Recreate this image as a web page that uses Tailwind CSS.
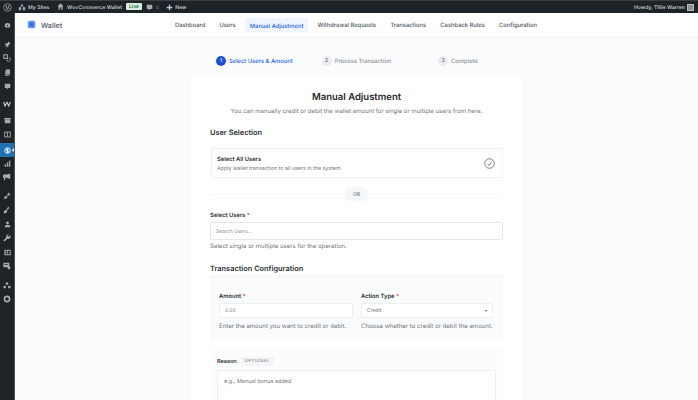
<!DOCTYPE html>
<html lang="en">
<head>
    <meta charset="UTF-8">
    <title>Wallet - Manual Adjustment</title>
    <script src="https://cdn.jsdelivr.net/npm/@tailwindcss/browser@4"></script>
</head>
<body class="w-[698px] h-[400px] overflow-hidden bg-[#f9fbfd] font-['Inter',sans-serif] text-[#1d2327] [text-rendering:geometricPrecision] antialiased">
    <!-- Admin bar -->
    <div class="h-[13px] bg-[#1d2327] border-t border-[#3a3f44] flex items-center text-[5.200px] text-[#d5d7d9] font-medium">
        <div class="w-[15px] flex justify-center">
            <svg class="w-[9px] h-[9px]" viewBox="0 0 20 20"><circle cx="10" cy="10" r="8.500" fill="none" stroke="#a7aaad" stroke-width="1.500"/><path d="M5 6.500h4M11 6.500h4M6.500 7l3 8 2-6M11.500 7l3 7" fill="none" stroke="#a7aaad" stroke-width="1.500"/></svg>
        </div>
        <div class="ml-[3px] flex items-center gap-[2px] w-[36px]">
            <svg class="w-[8px] h-[8px] shrink-0" viewBox="0 0 20 20" fill="#a7aaad"><path d="M10 2l3 4v3h-6V6zM2 12l3-3 3 3v6H2zM12 12l3-3 3 3v6h-6z"/></svg>
            <span class="pt-[3px] whitespace-nowrap">My Sites</span>
        </div>
        <div class="ml-[3px] flex items-center gap-[3px]">
            <svg class="w-[7px] h-[7px] shrink-0" viewBox="0 0 20 20" fill="#a7aaad"><path d="M10 1L1 9h3v10h4v-6h4v6h4V9h3z"/></svg>
            <span class="pt-[3px] whitespace-nowrap">WooCommerce Wallet</span>
        </div>
        <span class="ml-[4px] -translate-y-px px-[3px] h-[7px] leading-[8px] bg-[#d8efe0] text-[#14532d] text-[5px] rounded-[1px]">Live</span>
        <svg class="ml-[4px] w-[7px] h-[7px]" viewBox="0 0 20 20" fill="#a7aaad"><path d="M3 2h14a1 1 0 011 1v10a1 1 0 01-1 1h-5l-4 5v-5H3a1 1 0 01-1-1V3a1 1 0 011-1z"/></svg>
        <span class="ml-[3px] pt-[3px] text-[#6b7075]">0</span>
        <svg class="ml-[7px] w-[7px] h-[7px]" viewBox="0 0 20 20" fill="#c4c6c8"><path d="M8 2h4v6h6v4h-6v6H8v-6H2V8h6z"/></svg>
        <span class="ml-[2px] pt-[3px]">New</span>
        <span class="ml-auto pt-[3px] whitespace-nowrap">Howdy, Tillie Warren</span>
        <div class="ml-[2px] mr-[4px] w-[7px] h-[7px] bg-[#8f9396] border border-[#b9bbbd]"></div>
    </div>

    <div class="flex h-[387px]">
        <!-- Sidebar -->
        <div class="w-[15px] shrink-0 bg-[#1d2327] border-r border-[#4a4f54] flex flex-col text-[#a7aaad]">
            <div class="mt-[5px] h-[14px] flex items-center justify-center"><svg class="w-[7px] h-[7px]" viewBox="0 0 20 20" fill="#a7aaad"><path d="M10 3a8 8 0 00-8 8c0 2 .8 4 2 5h12c1.200-1 2-3 2-5a8 8 0 00-8-8zm0 9a2 2 0 110-4 2 2 0 010 4z"/></svg></div>
            <div class="mt-[5px] h-[14px] flex items-center justify-center"><svg class="w-[7px] h-[7px]" viewBox="0 0 20 20" fill="#a7aaad"><path d="M12 1l7 7-3 1-4 4 1 4-3 1-3-4-6 5 5-6-4-3 1-3 4 1 4-4z"/></svg></div>
            <div class="h-[14px] flex items-center justify-center"><svg class="w-[8px] h-[8px]" viewBox="0 0 20 20" fill="none" stroke="#a7aaad" stroke-width="2.500"><rect x="2" y="2" width="9" height="9"/><rect x="10" y="10" width="8" height="8" stroke-dasharray="3 2"/></svg></div>
            <div class="h-[14px] flex items-center justify-center"><svg class="w-[7px] h-[7px]" viewBox="0 0 20 20" fill="#a7aaad"><path d="M6 1h11v15H6z"/><path d="M3 4v15h11v-2H5V4z"/></svg></div>
            <div class="h-[14px] flex items-center justify-center"><svg class="w-[7px] h-[7px]" viewBox="0 0 20 20" fill="#a7aaad"><path d="M3 2h14a1 1 0 011 1v10a1 1 0 01-1 1h-5l-4 5v-5H3a1 1 0 01-1-1V3a1 1 0 011-1z"/></svg></div>
            <div class="mt-[4px] h-[14px] flex items-center justify-center"><svg class="w-[8px] h-[6px]" viewBox="0 0 24 16" fill="none" stroke="#c3c4c7" stroke-width="3.500"><path d="M2 2l4 12 6-11 5 11 5-12"/></svg></div>
            <div class="mt-[2px] h-[14px] flex items-center justify-center"><svg class="w-[7px] h-[7px]" viewBox="0 0 20 20" fill="#a7aaad"><path d="M1 3h18v4H1zM2 8h16v10H2z"/></svg></div>
            <div class="h-[14px] flex items-center justify-center"><svg class="w-[7px] h-[7px]" viewBox="0 0 20 20" fill="none" stroke="#a7aaad" stroke-width="2.500"><rect x="2" y="3" width="16" height="14"/><path d="M10 3v14"/></svg></div>
            <!-- active Wallet item -->
            <div class="relative mt-[2px] h-[14px] bg-[#2271b1] flex items-center justify-center">
                <svg class="w-[7px] h-[9px]" viewBox="0 0 14 18" fill="none" stroke="#e6f0f8" stroke-width="2"><circle cx="7" cy="9" r="5.500"/><path d="M7 5v8M9 6.500H6a1.500 1.500 0 000 3h2a1.500 1.500 0 010 3H5"/></svg>
                <div class="absolute right-0 top-[5px] w-0 h-0 border-y-[2px] border-y-transparent border-r-[2px] border-r-white"></div>
            </div>
            <div class="-mt-px h-[14px] flex items-center justify-center"><svg class="w-[7px] h-[7px]" viewBox="0 0 20 20" fill="#a7aaad"><path d="M2 12h4v7H2zM8 7h4v12H8zM14 2h4v17h-4z"/></svg></div>
            <div class="h-[14px] flex items-center justify-center"><svg class="w-[8px] h-[8px]" viewBox="0 0 20 20" fill="#a7aaad"><path d="M18 2v13L8 12H5l1 6H3l-1-6a4 4 0 010-8h6z"/></svg></div>
            <div class="mt-[5px] h-[14px] flex items-center justify-center"><svg class="w-[8px] h-[8px]" viewBox="0 0 20 20" fill="#a7aaad"><path d="M13 1l6 6-3 2-2-1-4 4 1 2-3 3-3-1-4 4 3-6-1-2 3-2 2 1 4-4-1-2z"/></svg></div>
            <div class="h-[14px] flex items-center justify-center"><svg class="w-[8px] h-[8px]" viewBox="0 0 20 20" fill="#a7aaad"><path d="M13 2l3 3-5 5-2-2zM8 9l3 3-3 6H2v-5z"/></svg></div>
            <div class="h-[14px] flex items-center justify-center"><svg class="w-[7px] h-[7px]" viewBox="0 0 20 20" fill="#a7aaad"><circle cx="10" cy="5.500" r="4"/><path d="M2 18c0-5 3-7 8-7s8 2 8 7z"/></svg></div>
            <div class="h-[14px] flex items-center justify-center"><svg class="w-[8px] h-[8px]" viewBox="0 0 20 20" fill="#a7aaad"><path d="M18 3l-4 4-2-1-1-2 4-3a6 6 0 00-7 8l-7 7 3 3 7-7a6 6 0 007-9z"/></svg></div>
            <div class="h-[14px] flex items-center justify-center"><svg class="w-[7px] h-[7px]" viewBox="0 0 20 20" fill="#a7aaad"><path d="M1 2h18v16H1zM4 5v3h5V5zm7 0v10h5V5zM4 10v5h5v-5z" fill-rule="evenodd"/></svg></div>
            <div class="h-[14px] flex items-center justify-center"><svg class="w-[8px] h-[8px]" viewBox="0 0 20 20" fill="#a7aaad"><path d="M1 2h15v11H1zM4 5v2h9V5z" fill-rule="evenodd"/><circle cx="15" cy="15" r="3.500"/></svg></div>
            <div class="mt-[5px] h-[14px] flex items-center justify-center"><svg class="w-[8px] h-[7px]" viewBox="0 0 20 18" fill="#a7aaad"><circle cx="10" cy="4" r="3.500"/><circle cx="4" cy="13" r="3.500"/><circle cx="16" cy="13" r="3.500"/></svg></div>
            <div class="h-[14px] flex items-center justify-center"><svg class="w-[8px] h-[8px]" viewBox="0 0 20 20" fill="none" stroke="#a7aaad" stroke-width="4"><circle cx="10" cy="10" r="6.500"/></svg></div>
        </div>

        <div class="flex-1 min-w-0">
            <!-- Plugin header -->
            <div class="h-[23px] bg-white flex items-center shadow-[0_1px_2px_rgba(0,0,0,0.02)]">
                <div class="ml-[13px] w-[7px] h-[7px] rounded-[1.500px] bg-[#2563eb] border-2 border-[#5b8ff0] shadow-[0_0_0_1px_#dbe7fb]"></div>
                <span class="ml-[6px] w-[132px] pt-[3px] text-[7.200px] font-medium text-[#50575e]">Wallet</span>
                <nav class="-ml-[3px] flex items-center gap-[4.200px] text-[5.800px] font-medium text-[#50575e] whitespace-nowrap">
                    <a class="px-[5px] pt-[3px]">Dashboard</a>
                    <a class="px-[5px] pt-[3px]">Users</a>
                    <a class="px-[5px] h-[14px] leading-[17px] rounded-[2px] bg-[#eff5fe] text-[#2563eb]">Manual Adjustment</a>
                    <a class="px-[5px] pt-[3px]">Withdrawal Requests</a>
                    <a class="px-[5px] pt-[3px]">Transactions</a>
                    <a class="px-[5px] pt-[3px]">Cashback Rules</a>
                    <a class="px-[5px] pt-[3px]">Configuration</a>
                </nav>
            </div>

            <div class="ml-[176px] w-[331px] mt-[9px]">
                <!-- Stepper -->
                <div class="h-[32px] bg-[#fbfcfd] flex items-center text-[5.800px] font-medium whitespace-nowrap">
                    <div class="ml-[25px] w-[10px] h-[10px] pt-[2px] rounded-full bg-[#1d4ed8] text-white text-[5px] flex items-center justify-center">1</div>
                    <span class="ml-[3px] pt-[2px] text-[#2563eb]">Select Users &amp; Amount</span>
                    <div class="ml-[29px] w-[10px] h-[10px] pt-[2px] rounded-full bg-[#e9ebee] text-[#646970] text-[5px] flex items-center justify-center">2</div>
                    <span class="ml-[3px] pt-[2px] text-[#8c8f94]">Process Transaction</span>
                    <div class="ml-[47px] w-[10px] h-[10px] pt-[2px] rounded-full bg-[#e9ebee] text-[#646970] text-[5px] flex items-center justify-center">3</div>
                    <span class="ml-[3px] pt-[2px] text-[#8c8f94]">Complete</span>
                </div>

                <!-- Main card -->
                <div class="mt-px h-[330px] bg-white px-[19px]">
                    <h1 class="pt-[14px] text-center text-[9.500px] leading-[12px] font-semibold text-[#23282d]">Manual Adjustment</h1>
                    <p class="mt-[4px] text-center text-[6px] leading-[8px] text-[#72777c] whitespace-nowrap">You can manually credit or debit the wallet amount for single or multiple users from here.</p>

                    <h2 class="mt-[12px] text-[7.400px] leading-[10px] font-semibold text-[#2c3338]">User Selection</h2>
                    <div class="mt-[10px] ml-px h-[30px] rounded-[2px] border border-[#eef0f2] flex items-center justify-between pl-[5px] pr-[7px]">
                        <div class="pt-[2px]">
                            <div class="text-[5.800px] leading-[8px] font-semibold text-[#2c3338]">Select All Users</div>
                            <div class="mt-[2px] text-[5.300px] leading-[7px] text-[#72777c]">Apply wallet transaction to all users in the system</div>
                        </div>
                        <svg class="w-[11px] h-[11px]" viewBox="0 0 22 22" fill="none" stroke="#50575e" stroke-width="1.500"><circle cx="11" cy="11" r="9.500"/><path d="M7 11.500l3 3 5-6"/></svg>
                    </div>
                    <div class="mt-[9px] flex items-center">
                        <div class="flex-1 h-px bg-[#f6f7f8]"></div>
                        <div class="w-[23px] h-[14px] rounded-[5px] bg-[#f6f7f8] text-[5px] leading-[16px] text-center font-medium text-[#72777c]">OR</div>
                        <div class="flex-1 h-px bg-[#f6f7f8]"></div>
                    </div>

                    <label class="block mt-[11px] text-[5.800px] leading-[8px] font-semibold text-[#2c3338]">Select Users <span class="text-[#d63638]">*</span></label>
                    <div class="mt-[2px] h-[18px] rounded-[2px] border border-[#e5e7ea] pl-[5px] text-[5px] leading-[18px] text-[#8c8f94]">Search Users...</div>
                    <p class="mt-[3px] text-[6.050px] leading-[8px] text-[#72777c]">Select single or multiple users for the operation.</p>

                    <h2 class="mt-[12px] pb-px text-[7.400px] leading-[12px] font-semibold text-[#2c3338] border-b border-[#f3f4f6]">Transaction Configuration</h2>
                    <div class="h-[64px] bg-[#f9fbfc] px-[9px] pt-[16px] grid grid-cols-[134px_132px] gap-x-[8px]">
                        <div>
                            <label class="block text-[5.800px] leading-[8px] font-semibold text-[#2c3338]">Amount <span class="text-[#d63638]">*</span></label>
                            <div class="mt-[2px] h-[15px] rounded-[2px] bg-white border border-[#edeff1] pl-[5px] text-[5px] leading-[15px] text-[#8c8f94]">0.00</div>
                            <p class="mt-[5px] text-[6.050px] leading-[8px] text-[#72777c] whitespace-nowrap">Enter the amount you want to credit or debit.</p>
                        </div>
                        <div>
                            <label class="block text-[5.800px] leading-[8px] font-semibold text-[#2c3338]">Action Type <span class="text-[#d63638]">*</span></label>
                            <div class="mt-[2px] h-[15px] rounded-[2px] bg-white border border-[#edeff1] px-[5px] text-[5px] leading-[13px] text-[#646970] flex items-center justify-between">
                                <span class="pt-[2px]">Credit</span>
                                <div class="w-0 h-0 border-x-[1.500px] border-x-transparent border-t-[2px] border-t-[#50575e]"></div>
                            </div>
                            <p class="mt-[5px] text-[6.050px] leading-[8px] text-[#72777c] whitespace-nowrap">Choose whether to credit or debit the amount.</p>
                        </div>
                    </div>

                    <div class="mt-[9px] px-[7px] pt-[7px] bg-[#fbfcfd] h-[60px]">
                        <div class="flex items-center h-[9px]">
                            <label class="pt-[2px] text-[5.500px] font-semibold text-[#2c3338]">Reason</label>
                            <span class="ml-[4px] w-[33px] h-[9px] rounded-[1px] bg-[#f3f4f6] text-center text-[4.200px] leading-[10px] tracking-[0.5px] text-[#72777c]">OPTIONAL</span>
                        </div>
                        <div class="mt-[4px] h-[50px] rounded-[2px] bg-white border border-[#edeff1] pl-[6px] pt-[7px] text-[5.500px] leading-[8px] text-[#72777c]">e.g., Manual bonus added</div>
                    </div>
                </div>
            </div>
        </div>
    </div>
</body>
</html>
